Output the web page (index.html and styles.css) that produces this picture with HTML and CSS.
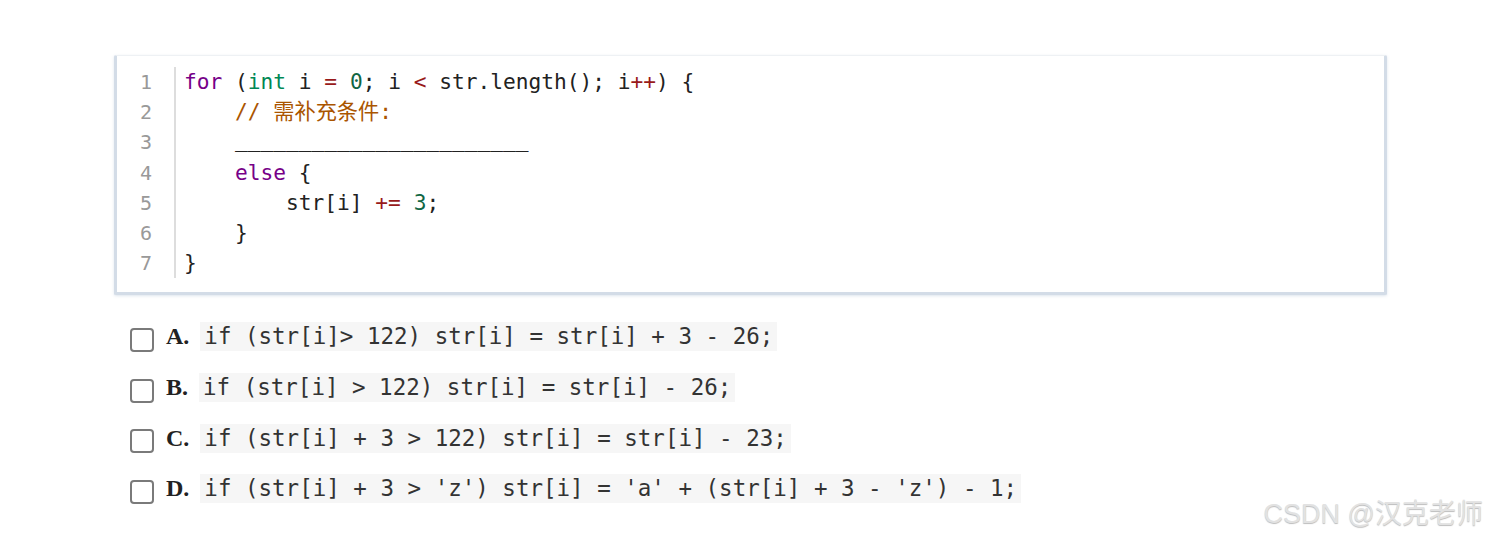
FILE: index.html
```html
<!DOCTYPE html>
<html lang="zh">
<head>
<meta charset="utf-8">
<link rel="stylesheet" href="styles.css">
</head>
<body>
<div class="page">
  <div class="code-box">
    <div class="gutter">
      <div>1</div><div>2</div><div>3</div><div>4</div><div>5</div><div>6</div><div>7</div>
    </div>
    <pre class="code"><span class="kw">for</span> (<span class="ty">int</span> i <span class="op">=</span> <span class="num">0</span>; i <span class="op">&lt;</span> str.length(); i<span class="op">++</span>) {
    <span class="cm">// 需补充条件:</span>
    <span class="blank">_______________________</span>
    <span class="kw">else</span> {
        str[i] <span class="op">+=</span> <span class="num">3</span>;
    }
}</pre>
  </div>
  <ul class="options">
    <li class="opt"><span class="box"></span><b class="lbl">A.</b><code class="ic">if (str[i]&gt; 122) str[i] = str[i] + 3 - 26;</code></li>
    <li class="opt"><span class="box"></span><b class="lbl">B.</b><code class="ic">if (str[i] &gt; 122) str[i] = str[i] - 26;</code></li>
    <li class="opt"><span class="box"></span><b class="lbl">C.</b><code class="ic">if (str[i] + 3 &gt; 122) str[i] = str[i] - 23;</code></li>
    <li class="opt"><span class="box"></span><b class="lbl">D.</b><code class="ic">if (str[i] + 3 &gt; 'z') str[i] = 'a' + (str[i] + 3 - 'z') - 1;</code></li>
  </ul>
  <div class="watermark">CSDN @汉克老师</div>
</div>
</body>
</html>
```

FILE: styles.css
```css
html, body {
  margin: 0;
  padding: 0;
  background: #ffffff;
}
.page {
  position: relative;
  width: 1487px;
  height: 537px;
  padding: 55px 0 0 114px;
  box-sizing: border-box;
}
.code-box {
  width: 1273px;
  box-sizing: border-box;
  display: flex;
  border-top: 1px solid #eef1f4;
  border-left: 3px solid #d3dce7;
  border-right: 3px solid #d3dce7;
  border-bottom: 3px solid #d3dce7;
  border-radius: 2px;
  box-shadow: 0 1px 3px rgba(180, 195, 215, 0.45);
  padding: 11px 0 14px 0;
  background: #fff;
}
.gutter {
  width: 59px;
  box-sizing: border-box;
  padding-right: 22px;
  text-align: right;
  border-right: 2px solid #dddddd;
  font-family: "DejaVu Sans Mono", monospace;
  font-size: 20px;
  line-height: 30.2px;
  color: #999999;
}
.code {
  margin: 0;
  padding-left: 8px;
  font-family: "DejaVu Sans Mono", "Noto Sans CJK SC", monospace;
  font-size: 21.2px;
  line-height: 30.2px;
  color: #222222;
}
.blank {
  position: relative;
  top: -2px;
}
.kw { color: #770088; }
.ty { color: #008855; }
.op { color: #981a1a; }
.num { color: #116644; }
.cm { color: #aa5500; }
.options {
  list-style: none;
  margin: 0;
  padding: 27px 0 0 16px;
  display: flex;
  flex-direction: column;
  gap: 21.7px;
}
.opt {
  display: flex;
  align-items: center;
  height: 29px;
}
.box {
  width: 20px;
  height: 20px;
  border: 2px solid #7a7a7a;
  border-radius: 4px;
  margin-top: 6px;
  margin-right: 12px;
  flex: none;
}
.lbl {
  font-family: "Liberation Serif", serif;
  font-size: 24px;
  font-weight: bold;
  color: #222;
  margin-right: 11px;
}
.ic {
  font-family: "DejaVu Sans Mono", monospace;
  font-size: 22.5px;
  line-height: 29px;
  background: #f6f6f6;
  color: #333333;
  padding: 0 4px;
  white-space: pre;
}
.watermark {
  position: absolute;
  right: 4px;
  top: 492px;
  font-family: "Liberation Sans", "Noto Sans CJK SC", sans-serif;
  font-size: 27px;
  color: #e2e2e2;
  text-shadow: 0 1px 1px #bdbdbd;
}
```
